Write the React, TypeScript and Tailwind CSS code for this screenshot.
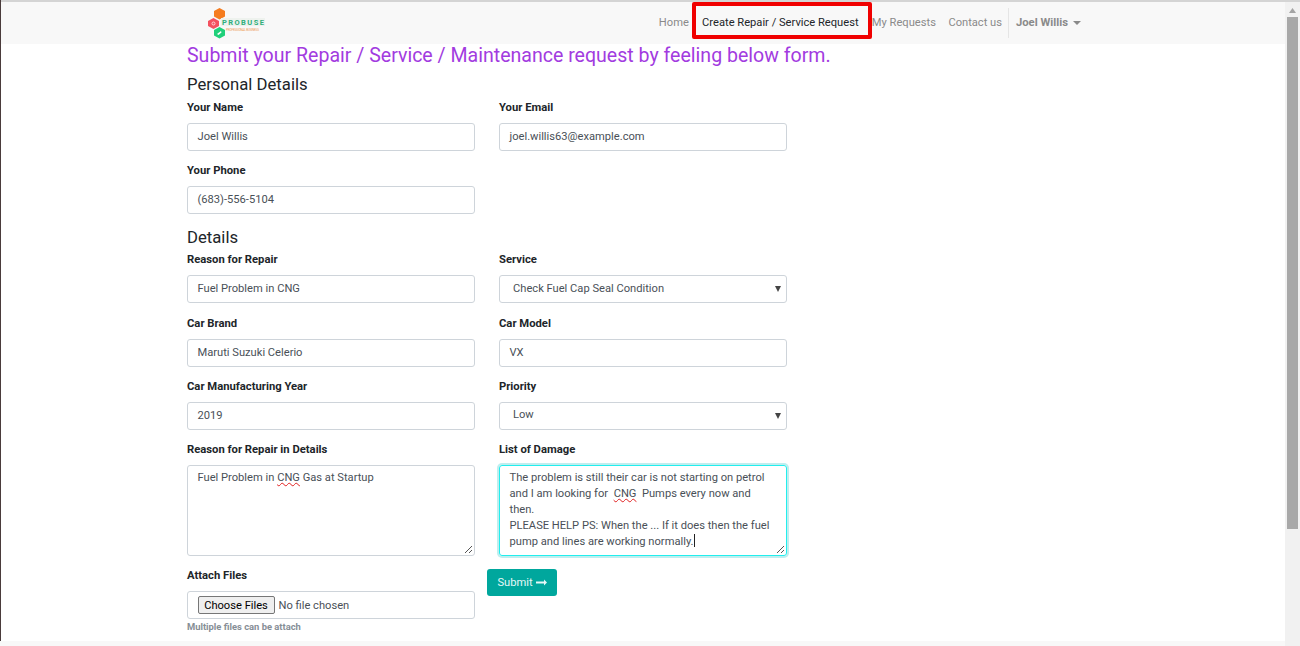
const labelCls = "block h-[16px] leading-[16px] mb-[7px] text-[11.25px] font-bold text-[#212529]";
const inputCls =
  "block w-[288px] h-[28px] px-[9.500px] border border-[#ced4da] rounded-[3px] bg-white text-[11.15px] leading-[26px] text-[#495057]";

function Field({ label, value }: { label: string; value: string }) {
  return (
    <div className="w-[288px]">
      <div className={labelCls}>{label}</div>
      <div className={inputCls}>{value}</div>
    </div>
  );
}

function SelectField({ label, value }: { label: string; value: string }) {
  return (
    <div className="w-[288px]">
      <div className={labelCls}>{label}</div>
      <div className="flex items-center justify-between w-[288px] h-[28px] pl-[13px] pr-[5px] border border-[#ced4da] rounded-[3px] bg-white text-[11.15px] text-[#495057]">
        <span>{value}</span>
        <svg width="6" height="6" viewBox="0 0 6 6">
          <path d="M0 0h6L3 6z" fill="#444" />
        </svg>
      </div>
    </div>
  );
}

function Grip() {
  return (
    <svg className="absolute right-[1px] bottom-[1px]" width="9" height="9" viewBox="0 0 9 9">
      <path d="M1 8L8 1M5 8L8 5" stroke="#555" strokeWidth="1" fill="none" />
    </svg>
  );
}

function Squiggle({ children }: { children: string }) {
  return <span className="underline decoration-wavy decoration-[#e02020] decoration-1 underline-offset-[1px]">{children}</span>;
}

function Logo() {
  return (
    <svg className="mt-[1px]" width="58" height="31" viewBox="0 0 58 31">
      <path d="M11.5 0l5.5 3v5.5l-5.5 3-5.5-3V3z" fill="#f57c1f" />
      <path d="M5.5 10l5.5 3v5l-5.5 3-5.5-3v-5z" fill="#f4515f" />
      <path d="M11.5 19l5.5 3v5.5l-5.5 3-5.5-3V22z" fill="#20d07a" />
      <path d="M9 26l4-3 .5 1.500-3 2.500z" fill="#ffffff" />
      <circle cx="5.500" cy="15.500" r="1.500" fill="none" stroke="#ffffff" strokeWidth="0.7" />
      <rect x="13" y="10" width="44" height="8" fill="#eef2ee" />
      <text x="14" y="17" fontSize="7.5" fontWeight="700" textLength="42" fill="#2fae7b" fontFamily="Roboto, sans-serif">
        PROBUSE
      </text>
      <text x="18" y="22.500" fontSize="3" textLength="33" fill="#ee9a55" fontFamily="Roboto, sans-serif">
        PROFESSIONAL BUSINESS
      </text>
    </svg>
  );
}

export default function App() {
  return (
    <div className="relative w-[1300px] h-[646px] overflow-hidden bg-white font-['Roboto',sans-serif]">
      <div className="absolute left-0 top-0 w-[1px] h-full bg-[#4a3b3b]" />
      <div className="h-[2px] bg-[#d4d4d4]" />

      <div className="w-[1285px]">
        <nav className="h-[42px] bg-[#f8f8f8] flex items-center pl-[208px] pr-[204px] justify-between">
          <Logo />
          <div className="flex items-center h-full text-[11.15px] text-[#8a8a8a]">
            <span className="mr-[3px]">Home</span>
            <span className="self-start flex items-center justify-center w-[180px] h-[37px] pt-[5px] pr-[3px] border-[4px] border-[#f00000] rounded-[2px] text-[#212529]">
              Create Repair / Service Request
            </span>
            <span>My Requests</span>
            <span className="ml-[12.500px]">Contact us</span>
            <span className="ml-[6px] h-[30px] border-l border-[#e5e5e5] pl-[7px] flex items-center font-bold text-[11.25px]">
              Joel Willis
              <span className="ml-[5px] w-0 h-0 border-x-[4px] border-x-transparent border-t-[4px] border-t-[#8a8a8a]" />
            </span>
          </div>
        </nav>

        <main className="pl-[187px] w-[1000px]">
          <h1 className="text-[19.560px] leading-[24px] text-[#a23be0] whitespace-nowrap">
            Submit your Repair / Service / Maintenance request by feeling below form.
          </h1>
          <h2 className="mt-[7px] text-[16.700px] leading-[20px] text-[#212529]">Personal Details</h2>

          <div className="mt-[5px] grid grid-cols-[288px_288px] gap-x-6 gap-y-[12px]">
            <Field label="Your Name" value="Joel Willis" />
            <Field label="Your Email" value="joel.willis63@example.com" />
            <Field label="Your Phone" value="(683)-556-5104" />
          </div>

          <h2 className="mt-[14px] text-[16.700px] leading-[20px] text-[#212529]">Details</h2>

          <div className="mt-[4.450px] grid grid-cols-[288px_288px] gap-x-6 gap-y-[12.200px]">
            <Field label="Reason for Repair" value="Fuel Problem in CNG" />
            <SelectField label="Service" value="Check Fuel Cap Seal Condition" />
            <Field label="Car Brand" value="Maruti Suzuki Celerio" />
            <Field label="Car Model" value="VX" />
            <Field label="Car Manufacturing Year" value="2019" />
            <SelectField label="Priority" value="Low" />
            <div className="w-[288px]">
              <div className={labelCls}>Reason for Repair in Details</div>
              <div className="relative h-[91px] px-[9.500px] py-[4px] border border-[#ced4da] rounded-[3px] text-[11.15px] leading-[16px] text-[#495057]">
                Fuel Problem in <Squiggle>CNG</Squiggle> Gas at Startup
                <Grip />
              </div>
            </div>
            <div className="w-[288px]">
              <div className={labelCls}>List of Damage</div>
              <div className="relative h-[91px] px-[9.500px] py-[4px] border border-[#22eeee] rounded-[3px] shadow-[0_0_0_2px_#bfeeee] text-[11.15px] leading-[16px] text-[#495057] whitespace-pre-line">
                The problem is still their car is not starting on petrol{"\n"}and I am looking for{"\u00a0 "}
                <Squiggle>CNG</Squiggle>
                {"\u00a0 "}Pumps every now and{"\n"}then.{"\n"}PLEASE HELP PS: When the ... If it does then the fuel{"\n"}pump and lines are working normally.
                <span className="inline-block align-[-2px] w-[1px] h-[13px] bg-[#222]" />
                <Grip />
              </div>
            </div>
          </div>

          <div className="mt-[12.400px] flex items-start">
            <div className="w-[288px]">
              <div className={labelCls}>Attach Files</div>
              <div className="flex items-center h-[28px] pl-[9.500px] border border-[#ced4da] rounded-[3px] text-[11.15px] text-[#495057]">
                <span className="flex items-center justify-center w-[77px] h-[18px] pt-[1px] border border-[#767676] rounded-[2px] bg-[#efefef] text-black">
                  Choose Files
                </span>
                <span className="ml-[4px] pt-[1px]">No file chosen</span>
              </div>
              <div className="mt-[1px] text-[9.400px] leading-[14px] font-bold text-[#868e96]">Multiple files can be attach</div>
            </div>
            <div className="mt-[1px] ml-[12px] flex items-center justify-center gap-[3px] w-[70px] h-[27px] rounded-[3px] bg-[#00a79d] text-[11.15px] text-[#e6f8f7]">
              Submit
              <svg width="11" height="7" viewBox="0 0 11 7">
                <path d="M0 2.600h8V0.500L11 3.500 8 6.500V4.400H0z" fill="#e6f8f7" />
              </svg>
            </div>
          </div>
        </main>
      </div>

      <div className="absolute left-0 bottom-0 w-[1285px] h-[5px] bg-[#f8f8f8]" />

      <aside className="absolute right-0 top-[2px] bottom-0 w-[15px] bg-[#f1f1f1]">
        <svg className="absolute left-[4px] top-[6px]" width="7" height="5" viewBox="0 0 7 5">
          <path d="M3.500 0L7 5H0z" fill="#a3a3a3" />
        </svg>
        <div className="absolute left-[2px] top-[15px] w-[11px] h-[512px] bg-[#a8a8a8]" />
      </aside>
    </div>
  );
}
